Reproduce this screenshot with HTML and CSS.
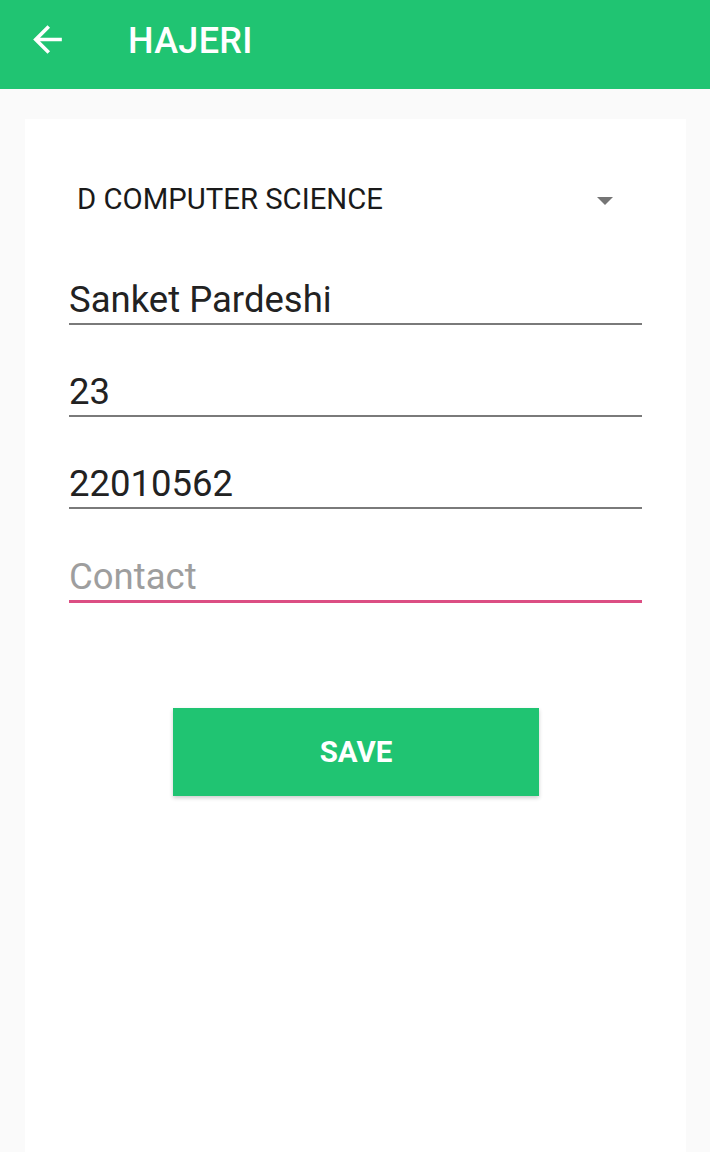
FILE: index.html
```html
<!DOCTYPE html>
<html>
<head>
<meta charset="utf-8">
<link rel="stylesheet" href="styles.css">
</head>
<body>
<header class="appbar">
  <svg class="back" viewBox="0 0 24 24"><path d="M20 11H7.83l5.59-5.59L12 4l-8 8 8 8 1.41-1.41L7.83 13H20v-2z" fill="#fff"/></svg>
  <h1 class="title">HAJERI</h1>
</header>
<main class="card">
  <div class="spinner">
    <span class="spinner-text">D COMPUTER SCIENCE</span>
    <span class="caret"></span>
  </div>
  <div class="field"><span class="value">Sanket Pardeshi</span></div>
  <div class="field"><span class="value">23</span></div>
  <div class="field"><span class="value">22010562</span></div>
  <div class="field focused"><span class="value hint">Contact</span></div>
  <div class="actions"><button class="save">SAVE</button></div>
</main>
</body>
</html>
```
FILE: styles.css
```css
html, body {
  margin: 0;
  padding: 0;
}
body {
  background: #fafafa;
  font-family: Roboto, "Liberation Sans", sans-serif;
  width: 710px;
  height: 1152px;
  overflow: hidden;
}
.appbar {
  height: 89px;
  background: #20c472;
  display: flex;
  align-items: center;
  padding-left: 26px;
  box-sizing: border-box;
}
.back {
  width: 43px;
  height: 43px;
  margin-top: -10px;
}
.title {
  margin: -8px 0 0 59px;
  color: #fff;
  font-size: 36px;
  font-weight: 500;
  letter-spacing: 0.3px;
}
.card {
  margin: 30px 24px 0 25px;
  background: #fff;
  height: 1040px;
  padding: 0 44px;
  box-sizing: border-box;
}
.spinner {
  display: flex;
  align-items: center;
  justify-content: space-between;
  padding: 60px 29px 0 8px;
  height: 40px;
}
.spinner-text {
  font-size: 29.3px;
  color: #1a1a1a;
}
.caret {
  width: 0;
  height: 0;
  border-left: 8px solid transparent;
  border-right: 8px solid transparent;
  border-top: 8px solid #757575;
  margin-top: 4px;
}
.field {
  margin-top: 58px;
  height: 46px;
  border-bottom: 2px solid #7a7a7a;
  display: flex;
  align-items: flex-end;
}
.field + .field {
  margin-top: 44px;
}
.field.focused {
  margin-top: 45px;
  border-bottom: 3px solid #dc4e83;
  height: 46px;
}
.value {
  font-size: 36.5px;
  color: #222;
  line-height: 46px;
  padding-left: 0;
  padding-bottom: 0;
}
.hint {
  color: #9e9e9e;
}
.actions {
  display: flex;
  justify-content: center;
  margin-top: 105px;
}
.save {
  width: 366px;
  height: 88px;
  background: #20c472;
  color: #fff;
  border: none;
  font-family: Roboto, "Liberation Sans", sans-serif;
  font-weight: 700;
  font-size: 29.5px;
  box-shadow: 0 2px 4px rgba(0,0,0,0.2);
  margin-left: 1px;
}
```
